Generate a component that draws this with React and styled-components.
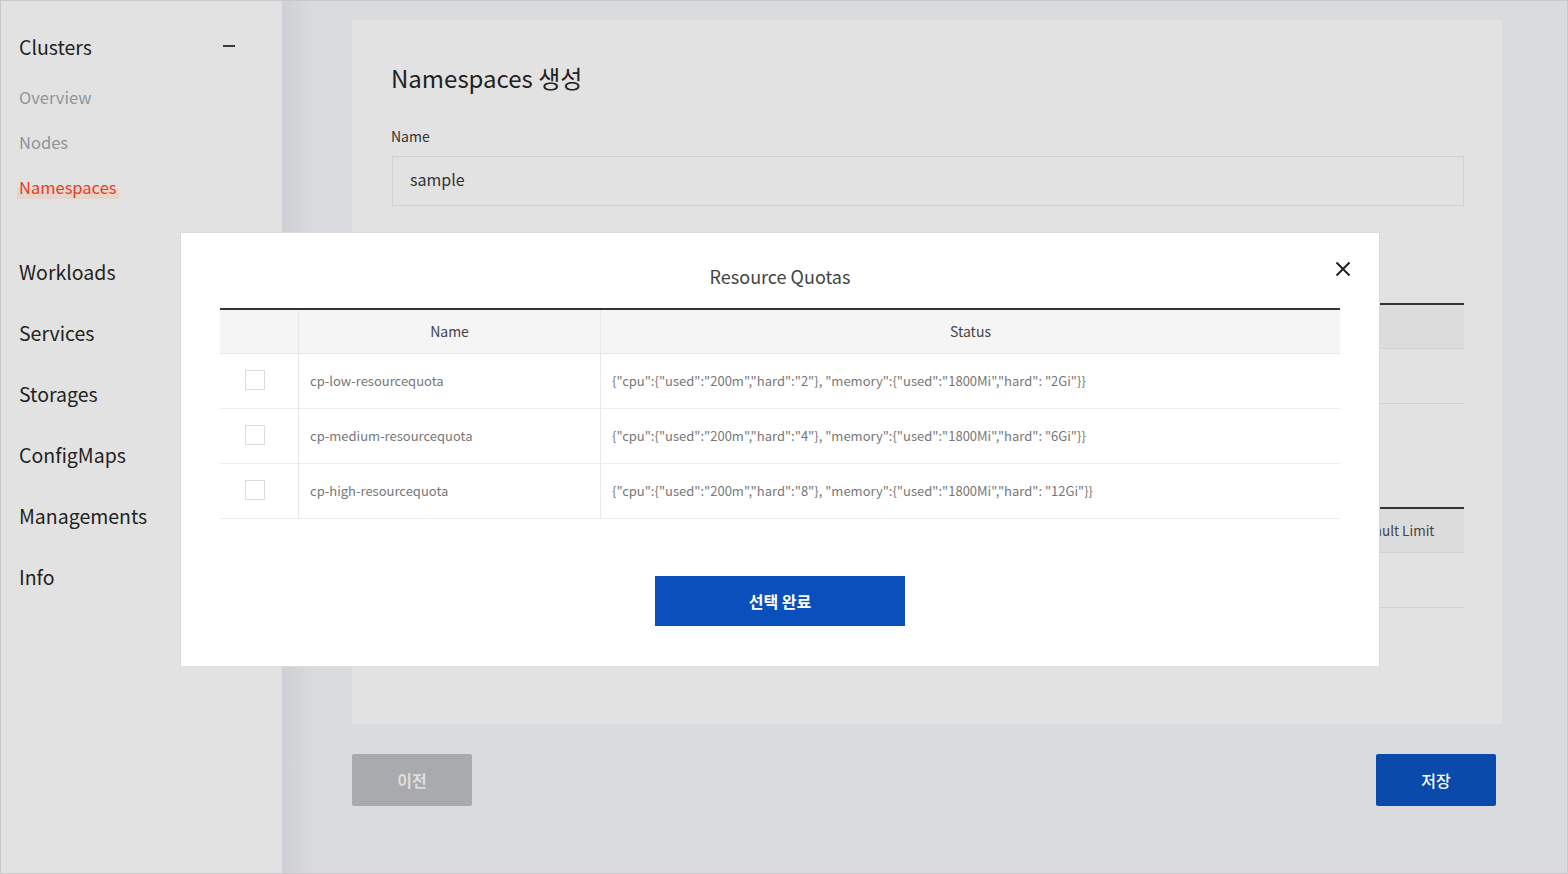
import React from "react";
import styled, { createGlobalStyle } from "styled-components";

const GlobalStyle = createGlobalStyle`
    * { box-sizing: border-box; }
    body {
        margin: 0;
        font-family: "Noto Sans CJK KR", "Noto Sans", sans-serif;
        color: #222;
    }
`;

const Frame = styled.div`
    position: relative;
    display: flex;
    width: 1568px;
    height: 874px;
    border: 1px solid #c9c9cb;
    overflow: hidden;
`;

const Sidebar = styled.nav`
    width: 281px;
    flex-shrink: 0;
    background: #e2e2e2;
    padding: 30px 0 0 18px;
`;

const GroupHead = styled.div`
    display: flex;
    align-items: center;
    justify-content: space-between;
    width: 216px;
    height: 30px;
    font-size: 19.5px;
    color: #222;
`;

const Minus = styled.span`
    width: 12px;
    height: 2px;
    background: #333a40;
`;

const SubList = styled.ul`
    list-style: none;
    margin: 14px 0 31px;
    padding: 0;
`;

const SubItem = styled.li`
    height: 45px;
    line-height: 45px;
    font-size: 16.5px;
    color: ${p => (p.active ? "#e2401e" : "#8d959d")};
`;

const Highlight = styled.span`
    margin-left: -2px;
    padding: 0 2px;
    background: linear-gradient(transparent 54%, #e7d4cd 54%);
`;

const MenuItem = styled.div`
    height: 61px;
    line-height: 61px;
    font-size: 19.5px;
    color: #222;
`;

const Main = styled.main`
    flex: 1;
    background: linear-gradient(90deg, #cfd0d4 0, #dadbdf 34px);
    padding: 19px 65px 0 70px;
`;

const Card = styled.section`
    height: 704px;
    background: #e2e2e2;
    padding: 42px 38px 0 39px;
`;

const Title = styled.h2`
    margin: 0;
    font-size: 24px;
    line-height: 32px;
    font-weight: 400;
    color: #222;
`;

const Label = styled.div`
    margin-top: 32px;
    font-size: 14px;
    line-height: 20px;
    color: #333;
`;

const Input = styled.div`
    margin: 10px 0 0 1px;
    height: 50px;
    border: 1px solid #d0d0d0;
    padding-left: 17px;
    line-height: 45px;
    font-size: 16px;
    color: #333;
`;

const BackTable = styled.div`
    margin: ${p => p.top}px 0 0 1px;
    border-top: 2px solid #333;
`;

const BackHead = styled.div`
    display: flex;
    justify-content: flex-end;
    height: 44px;
    background: #dcdcdc;
    border-bottom: 1px solid #d0d0d0;
`;

const BackHeadCell = styled.div`
    width: 140px;
    line-height: 43px;
    text-align: center;
    font-size: 13.5px;
    color: #444;
`;

const BackRow = styled.div`
    height: 55px;
    border-bottom: 1px solid #d0d0d0;
`;

const Actions = styled.div`
    display: flex;
    justify-content: space-between;
    margin: 30px 6px 0 0;
`;

const PageButton = styled.button`
    width: 120px;
    height: 52px;
    border: 0;
    border-radius: 2px;
    font-family: inherit;
    font-size: 16px;
    font-weight: ${p => (p.primary ? 500 : 700)};
    background: ${p => (p.primary ? "#0a4aab" : "#a9aaad")};
    color: ${p => (p.primary ? "#fff" : "#dedede")};
`;

const Modal = styled.div`
    position: absolute;
    left: 179px;
    top: 231px;
    width: 1200px;
    height: 435px;
    background: #fff;
    border: 1px solid #dcdcdc;
    padding: 31px 39px 0;
`;

const ModalTitle = styled.h3`
    margin: 0;
    text-align: center;
    font-size: 18px;
    line-height: 24px;
    font-weight: 400;
    color: #444;
`;

const Close = styled.button`
    position: absolute;
    top: 26px;
    right: 26px;
    width: 20px;
    height: 20px;
    padding: 0;
    border: 0;
    background: none;
`;

const Table = styled.div`
    margin-top: 20px;
    border-top: 2px solid #333;
`;

const Row = styled.div`
    display: grid;
    grid-template-columns: 78px 302px 1fr;
    height: ${p => (p.head ? 44 : 55)}px;
    background: ${p => (p.head ? "#f5f5f5" : "#fff")};
    border-bottom: 1px solid ${p => (p.head ? "#e6e6e6" : "#ececec")};
`;

const Cell = styled.div`
    display: flex;
    align-items: center;
    justify-content: ${p => (p.center ? "center" : "flex-start")};
    padding-left: ${p => (p.center ? 0 : p.first ? 25 : 11)}px;
    padding-bottom: 2px;
    border-left: ${p => (p.first ? 0 : "1px solid #e8e8e8")};
    font-size: ${p => (p.head ? 14 : 13)}px;
    color: ${p => (p.head ? "#444" : "#777")};
    white-space: nowrap;
`;

const Check = styled.span`
    width: 20px;
    height: 20px;
    border: 1px solid #dcdcdc;
    background: #fff;
`;

const Confirm = styled.button`
    display: block;
    margin: 57px auto 0;
    width: 250px;
    height: 50px;
    border: 0;
    background: #0a50bc;
    color: #fff;
    font-family: inherit;
    font-size: 16px;
    font-weight: 700;
`;

const quotas = [
    { name: "cp-low-resourcequota", status: '{"cpu":{"used":"200m","hard":"2"}, "memory":{"used":"1800Mi","hard": "2Gi"}}' },
    { name: "cp-medium-resourcequota", status: '{"cpu":{"used":"200m","hard":"4"}, "memory":{"used":"1800Mi","hard": "6Gi"}}' },
    { name: "cp-high-resourcequota", status: '{"cpu":{"used":"200m","hard":"8"}, "memory":{"used":"1800Mi","hard": "12Gi"}}' }
];

const menus = ["Workloads", "Services", "Storages", "ConfigMaps", "Managements", "Info"];

export default function App() {
    return (
        <>
            <GlobalStyle />
            <Frame>
                <Sidebar>
                    <GroupHead>
                        Clusters
                        <Minus />
                    </GroupHead>
                    <SubList>
                        <SubItem>Overview</SubItem>
                        <SubItem>Nodes</SubItem>
                        <SubItem active><Highlight>Namespaces</Highlight></SubItem>
                    </SubList>
                    {menus.map(m => <MenuItem key={m}>{m}</MenuItem>)}
                </Sidebar>

                <Main>
                    <Card>
                        <Title>Namespaces 생성</Title>
                        <Label>Name</Label>
                        <Input>sample</Input>
                        <BackTable top={97}>
                            <BackHead />
                            <BackRow />
                        </BackTable>
                        <BackTable top={103}>
                            <BackHead><BackHeadCell>Default Limit</BackHeadCell></BackHead>
                            <BackRow />
                        </BackTable>
                    </Card>
                    <Actions>
                        <PageButton>이전</PageButton>
                        <PageButton primary>저장</PageButton>
                    </Actions>
                </Main>

                <Modal>
                    <ModalTitle>Resource Quotas</ModalTitle>
                    <Close aria-label="close">
                        <svg width="20" height="20" viewBox="0 0 20 20">
                            <path d="M3.5 3.5 L16.5 16.5 M16.5 3.5 L3.5 16.5" stroke="#222" strokeWidth="2" fill="none" />
                        </svg>
                    </Close>
                    <Table>
                        <Row head>
                            <Cell head first center />
                            <Cell head center>Name</Cell>
                            <Cell head center>Status</Cell>
                        </Row>
                        {quotas.map(q => (
                            <Row key={q.name}>
                                <Cell first><Check /></Cell>
                                <Cell>{q.name}</Cell>
                                <Cell>{q.status}</Cell>
                            </Row>
                        ))}
                    </Table>
                    <Confirm>선택 완료</Confirm>
                </Modal>
            </Frame>
        </>
    );
}
